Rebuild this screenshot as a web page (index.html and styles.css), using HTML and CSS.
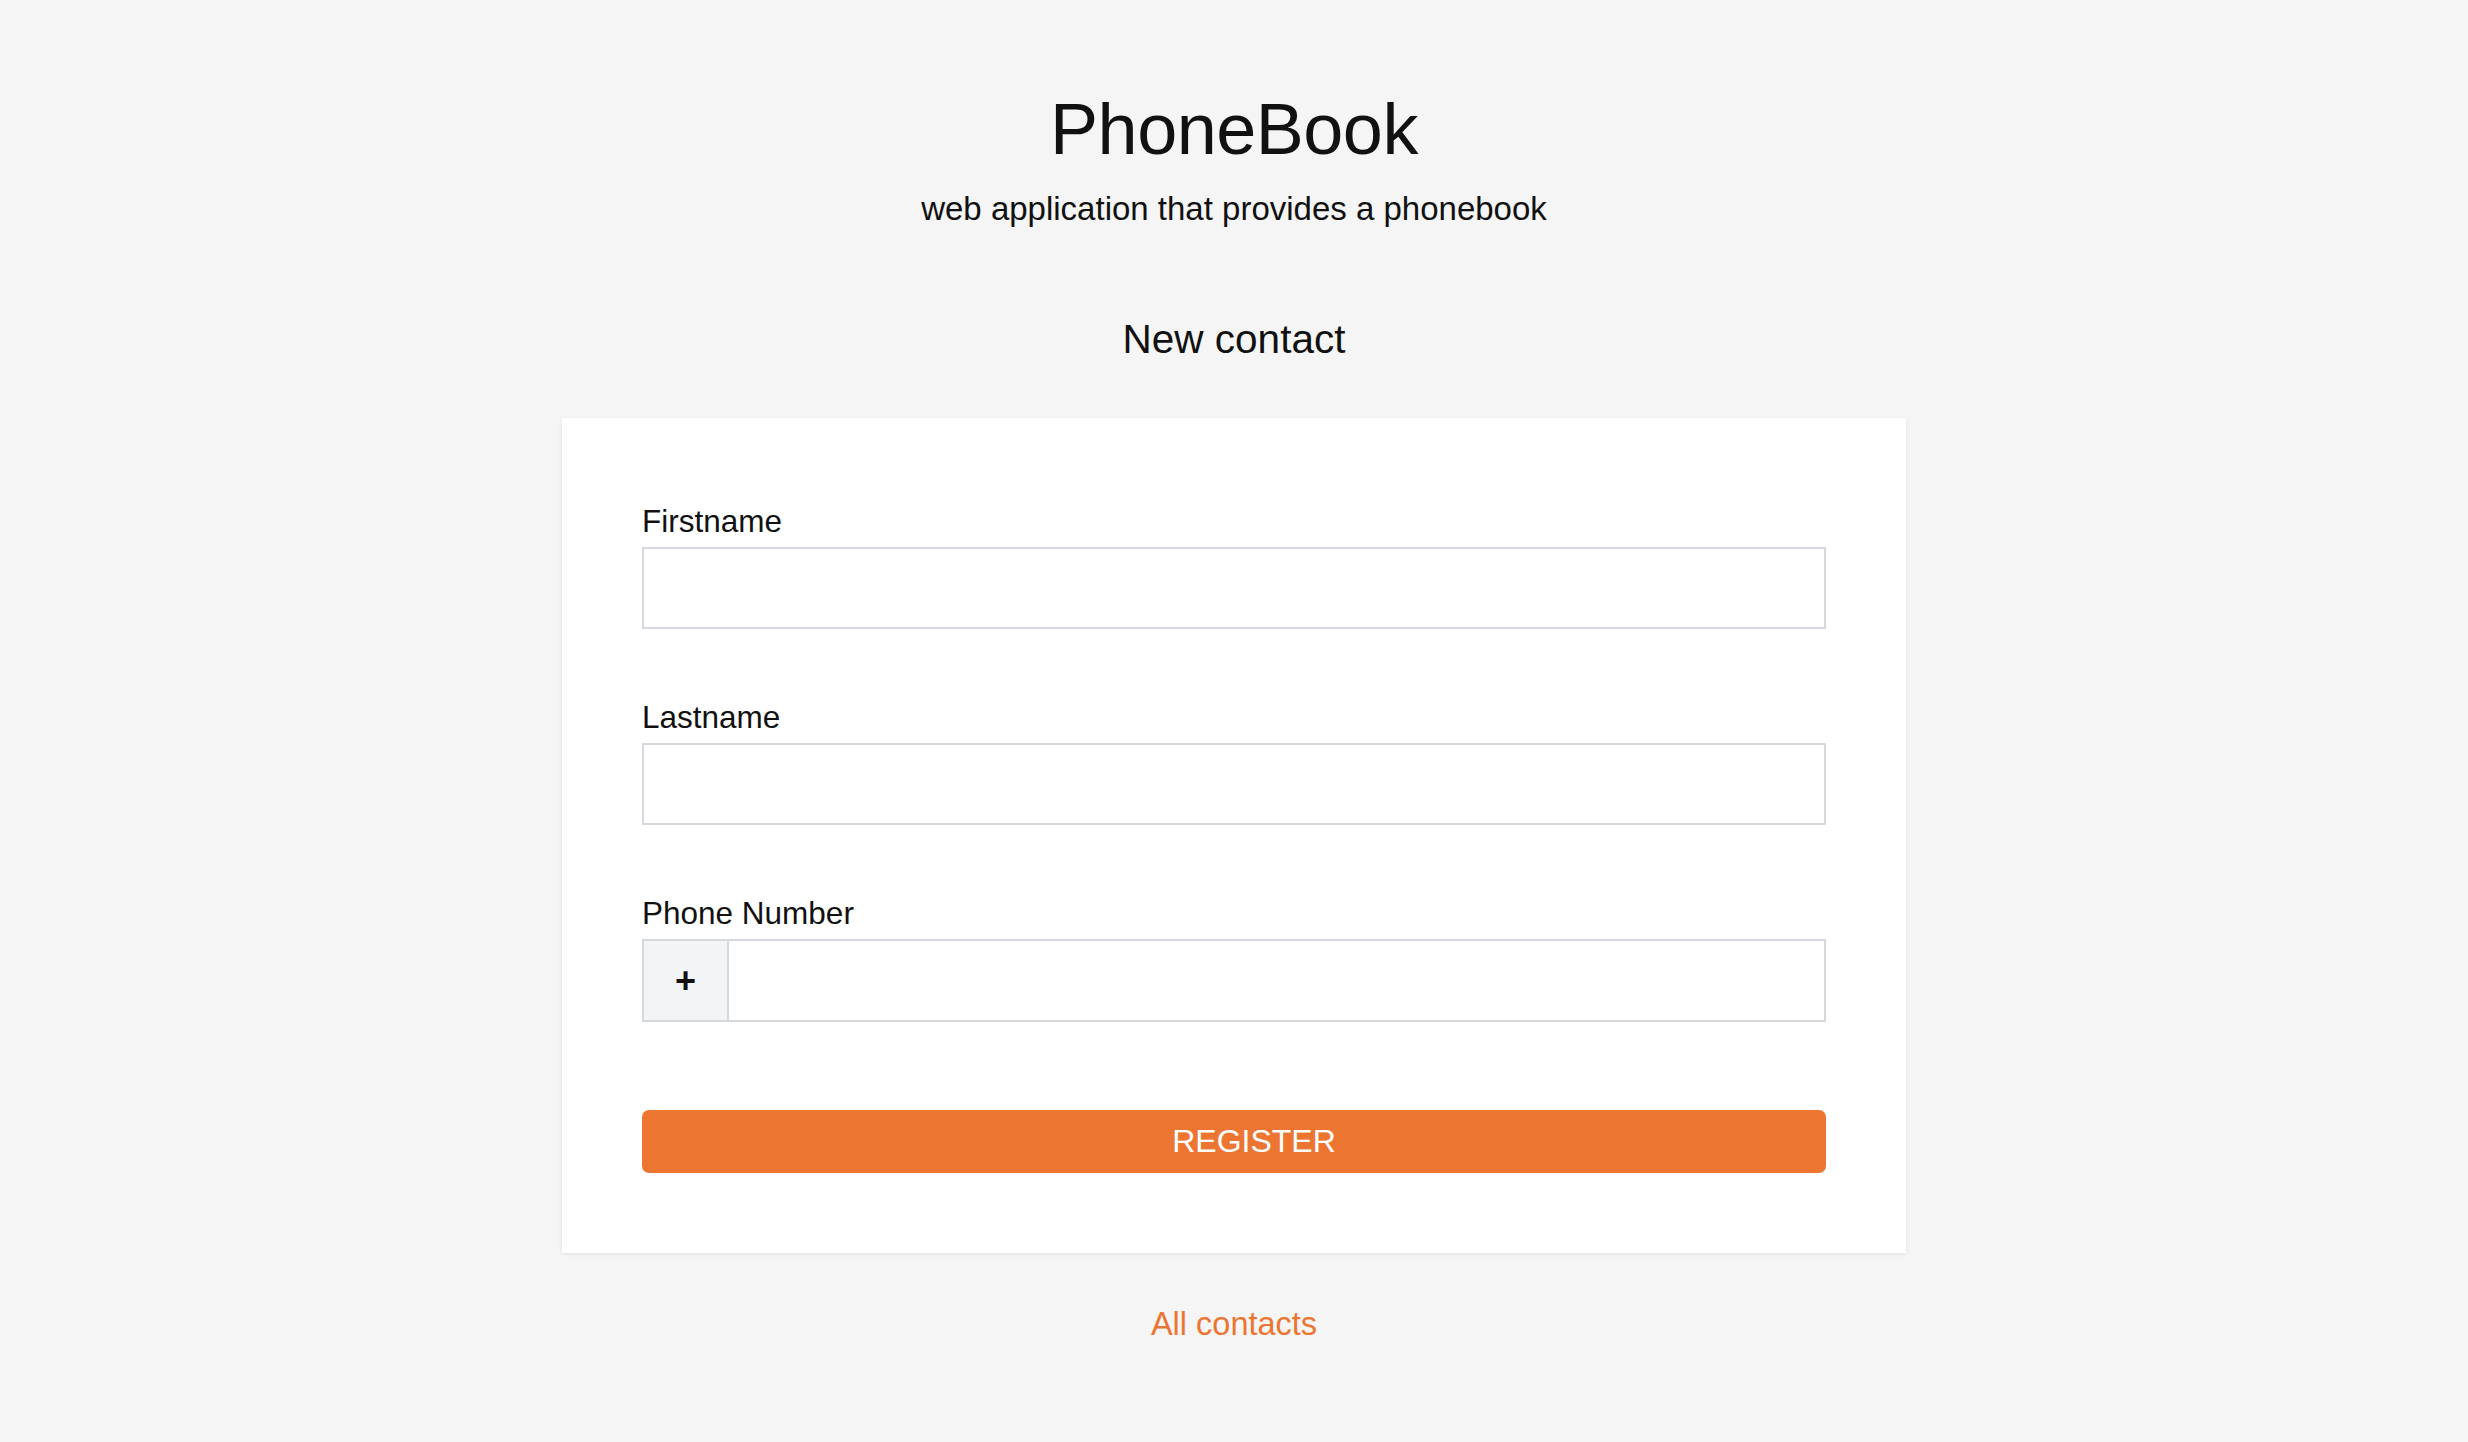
FILE: index.html
```html
<!DOCTYPE html>
<html lang="en">
<head>
<meta charset="utf-8">
<title>PhoneBook</title>
<link rel="stylesheet" href="styles.css">
</head>
<body>
<main class="page">
  <header class="header">
    <h1 class="title">PhoneBook</h1>
    <p class="subtitle">web application that provides a phonebook</p>
  </header>
  <h2 class="section-title">New contact</h2>
  <form class="card">
    <div class="field">
      <label class="label" for="firstname">Firstname</label>
      <input class="input" id="firstname" type="text">
    </div>
    <div class="field">
      <label class="label" for="lastname">Lastname</label>
      <input class="input" id="lastname" type="text">
    </div>
    <div class="field">
      <label class="label" for="phone">Phone Number</label>
      <div class="input-group">
        <span class="prefix">+</span>
        <input class="input-bare" id="phone" type="text">
      </div>
    </div>
    <button class="btn" type="button">REGISTER</button>
  </form>
  <a class="link" href="#">All contacts</a>
</main>
</body>
</html>
```

FILE: styles.css
```css
* { box-sizing: border-box; }

html, body {
  margin: 0;
  padding: 0;
  background: #f5f5f5;
}

body {
  font-family: "Liberation Sans", Arial, "Helvetica Neue", sans-serif;
  color: #111;
  min-height: 1442px;
}

.page {
  width: 1344px;
  margin: 0 auto;
  padding-top: 89px;
  display: flex;
  flex-direction: column;
  align-items: center;
}

.header {
  display: flex;
  flex-direction: column;
  align-items: center;
}

.title {
  margin: 0;
  font-size: 72px;
  line-height: 80px;
  font-weight: 400;
  letter-spacing: -0.5px;
}

.subtitle {
  margin: 20px 0 0;
  font-size: 33px;
  line-height: 40px;
}

.section-title {
  margin: 86px 0 0;
  font-size: 40.5px;
  line-height: 48px;
  font-weight: 400;
}

.card {
  margin-top: 55px;
  width: 1344px;
  background: #fff;
  padding: 84px 80px 80px;
  box-shadow: 0 1px 4px rgba(0, 0, 0, 0.09);
  display: flex;
  flex-direction: column;
}

.field {
  display: flex;
  flex-direction: column;
  margin-bottom: 69px;
}

.field:nth-child(3) {
  margin-bottom: 88px;
}

.label {
  font-size: 31.5px;
  line-height: 38px;
  margin-bottom: 7px;
}

.input {
  height: 82px;
  border: 2px solid #d5d8dc;
  background: #fff;
  font-family: inherit;
  font-size: 30px;
  padding: 0 20px;
  outline: none;
}

.input-group {
  display: flex;
  height: 83px;
  border: 2px solid #d5d8dc;
  background: #fff;
}

.prefix {
  width: 85px;
  background: #f3f4f6;
  border-right: 2px solid #d5d8dc;
  display: flex;
  align-items: center;
  justify-content: center;
  font-size: 36px;
  font-weight: 700;
  color: #111;
}

.input-bare {
  flex: 1;
  border: 0;
  outline: none;
  font-family: inherit;
  font-size: 30px;
  padding: 0 20px;
  background: transparent;
}

.btn {
  height: 63px;
  border: 0;
  border-radius: 7px;
  background: #ec7531;
  color: #fff;
  font-family: inherit;
  font-size: 32px;
  line-height: 63px;
  padding: 0 0 0 40px;
  cursor: pointer;
}

.link {
  margin-top: 51px;
  font-size: 32.5px;
  line-height: 40px;
  color: #ec7531;
  text-decoration: none;
}
```
